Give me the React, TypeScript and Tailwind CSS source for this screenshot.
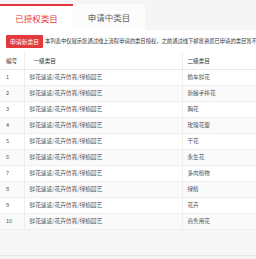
import React from 'react'

const rows = [
    { id: 1, sub: '婚车鲜花' },
    { id: 2, sub: '新娘手捧花' },
    { id: 3, sub: '胸花' },
    { id: 4, sub: '玫瑰花瓣' },
    { id: 5, sub: '干花' },
    { id: 6, sub: '永生花' },
    { id: 7, sub: '多肉植物' },
    { id: 8, sub: '绿植' },
    { id: 9, sub: '花卉' },
    { id: 10, sub: '商务用花' },
]

const FONT = { fontFamily: '"Noto Sans CJK SC", "Noto Sans", sans-serif' }

export default function App() {
    return (
        <div className="w-[256px] h-[259px] overflow-hidden bg-[#f5f5f5]" style={FONT}>
            <div className="w-[420px]">
                {/* tabs */}
                <div className="flex pt-1 h-[30px]">
                    <div className="w-[73px] flex items-center justify-center bg-white border-t-2 border-[#e4393c] text-[8.5px] text-[#e4393c]">
                        已授权类目
                    </div>
                    <div className="w-[72px] flex items-center justify-center bg-[#fcfcfc] text-[8.5px] text-[#666]">
                        申请中类目
                    </div>
                </div>

                <div className="bg-white">
                    {/* notice */}
                    <div className="flex items-center pl-[6px] pt-[5px] pb-[5px] gap-[2px]">
                        <button className="h-[13px] w-[37px] bg-[#e4393c] text-white text-[5.8px] leading-none rounded-[1px] flex items-center justify-center shrink-0">
                            申请新类目
                        </button>
                        <span className="text-[5.3px] text-[#333] whitespace-nowrap">
                            本列表中仅展示您通过线上流程申请的类目授权，之前通过线下邮寄资质已申请的类目暂不展示
                        </span>
                    </div>

                    {/* table */}
                    <table className="w-full border-collapse text-[5.6px] text-[#555]">
                        <thead>
                            <tr className="h-[16px] border-b border-[#e8e8e8] text-[#333]">
                                <th className="w-[24px] pl-[6px] text-left font-normal border-r border-[#eee]">编号</th>
                                <th className="w-[158px] pl-[9px] text-left font-normal border-r border-[#eee]">一级类目</th>
                                <th className="pl-[5px] text-left font-normal">二级类目</th>
                            </tr>
                        </thead>
                        <tbody>
                            {rows.map((r) => (
                                <tr
                                    key={r.id}
                                    className={`h-[16px] border-b border-[#eee] ${r.id % 2 === 0 ? 'bg-[#fafafa]' : 'bg-white'}`}
                                >
                                    <td className="pl-[6px] border-r border-[#eee]">{r.id}</td>
                                    <td className="pl-[5px] border-r border-[#eee] text-[5.7px]">鲜花速递/花卉仿真/绿植园艺</td>
                                    <td className="pl-[5px]">{r.sub}</td>
                                </tr>
                            ))}
                        </tbody>
                    </table>
                    <div className="h-[26px] bg-[#f7f7f7] border-b border-[#e8e8e8]" />
                </div>
            </div>
        </div>
    )
}
